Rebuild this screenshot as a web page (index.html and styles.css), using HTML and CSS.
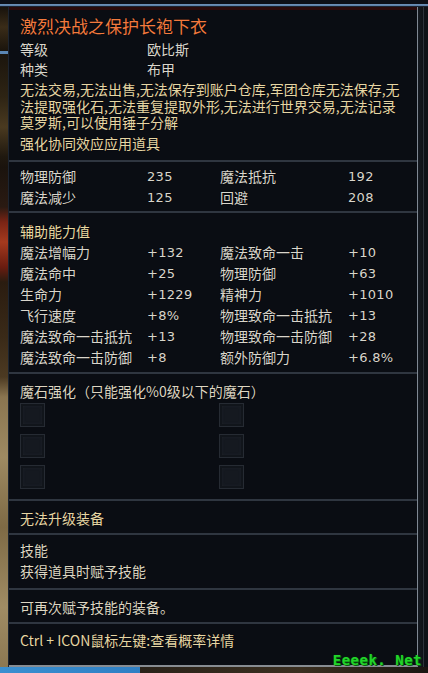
FILE: index.html
```html
<!DOCTYPE html>
<html lang="zh-CN">
<head>
<meta charset="utf-8">
<title>激烈决战之保护长袍下衣</title>
<link rel="stylesheet" href="styles.css">
</head>
<body>
<div class="screen">
  <div class="topline"></div>
  <div class="main">
    <div class="scene-left"></div>
    <div class="tooltip">
      <div class="redband"></div>
      <section class="sec sec-head">
        <div class="title">激烈决战之保护长袍下衣</div>
        <div class="kv"><span class="k">等级</span><span class="v">欧比斯</span></div>
        <div class="kv"><span class="k">种类</span><span class="v">布甲</span></div>
        <p class="desc">无法交易,无法出售,无法保存到账户仓库,军团仓库无法保存,无法提取强化石,无法重复提取外形,无法进行世界交易,无法记录莫罗斯,可以使用锤子分解</p>
        <div class="note">强化协同效应应用道具</div>
      </section>
      <section class="sec sec-base">
        <div class="stats">
          <span>物理防御</span><span class="num">235</span><span>魔法抵抗</span><span class="num">192</span>
          <span>魔法减少</span><span class="num">125</span><span>回避</span><span class="num">208</span>
        </div>
      </section>
      <section class="sec sec-bonus">
        <div class="heading">辅助能力值</div>
        <div class="stats">
          <span>魔法增幅力</span><span class="num">+132</span><span>魔法致命一击</span><span class="num">+10</span>
          <span>魔法命中</span><span class="num">+25</span><span>物理防御</span><span class="num">+63</span>
          <span>生命力</span><span class="num">+1229</span><span>精神力</span><span class="num">+1010</span>
          <span>飞行速度</span><span class="num">+8%</span><span>物理致命一击抵抗</span><span class="num">+13</span>
          <span>魔法致命一击抵抗</span><span class="num">+13</span><span>物理致命一击防御</span><span class="num">+28</span>
          <span>魔法致命一击防御</span><span class="num">+8</span><span>额外防御力</span><span class="num">+6.8%</span>
        </div>
      </section>
      <section class="sec sec-stones">
        <div class="line">魔石强化（只能强化%0级以下的魔石）</div>
        <div class="slots">
          <i class="slot"></i><i class="slot"></i>
          <i class="slot"></i><i class="slot"></i>
          <i class="slot"></i><i class="slot"></i>
        </div>
      </section>
      <section class="sec sec-one">
        <div class="line cream">无法升级装备</div>
      </section>
      <section class="sec sec-skill">
        <div class="line21">技能</div>
        <div class="line21">获得道具时赋予技能</div>
      </section>
      <section class="sec sec-one">
        <div class="line">可再次赋予技能的装备。</div>
      </section>
      <section class="sec sec-last">
        <div class="line cream">Ctrl + ICON鼠标左键:查看概率详情</div>
      </section>
    </div>
    <div class="scene-right"></div>
  </div>
  <div class="bottomstrip"></div>
  <div class="watermark">Eeeek. Net</div>
</div>
</body>
</html>
```

FILE: styles.css
```css
* { box-sizing: border-box; }
html, body { margin: 0; padding: 0; }
body {
  width: 428px;
  height: 673px;
  overflow: hidden;
  background: #0b0e13;
  font-family: "Noto Sans CJK SC", "Noto Sans", sans-serif;
  font-size: 14px;
  color: #d8d3c6;
}
.screen {
  position: relative;
  width: 428px;
  height: 673px;
  display: flex;
  flex-direction: column;
}
.topline {
  height: 7px;
  background: linear-gradient(to bottom, #0c1018 0, #0c1018 4px, #6d93bb 4px, #5a7ea5 6px, #1a2230 6px);
}
.main {
  display: flex;
  height: 660px;
}
.scene-left {
  width: 9px;
  background:
    linear-gradient(to bottom,
      #17120c 0, #3a2c18 20px, #1a140c 44px,
      #5b86b3 44px, #5b86b3 47px,
      #1b150d 47px, #2e2414 90px, #4a3a20 120px, #1f180f 150px,
      #1a130d 160px, #2a1a12 200px, #7a2415 215px, #a53a1e 235px, #6a1c10 260px,
      #2a1c10 275px, #3a2a18 330px, #4c3a22 370px,
      #8a7550 390px, #9e8a62 450px, #7e6a45 520px, #a08c64 600px, #8c7852 660px);
  border-right: 1px solid #1c2430;
}
.scene-right {
  width: 11px;
  border-left: 1px solid #7f8893;
  background: linear-gradient(to right, #151a21 0, #0e1217 5px, #2d333b 5px, #2d333b 6px, #0e1217 6px);
}
.tooltip {
  flex: 1;
  display: flex;
  flex-direction: column;
  background: #0a0d13;
  border-bottom: 2px solid #878c92;
}
.redband {
  height: 3px;
  background: #2a0b0c;
}
.sec {
  padding-left: 11px;
  border-bottom: 2px solid #2f3640;
  text-shadow: 0 0 1px rgba(0,0,0,0.9);
}
.sec-last { border-bottom: 0; padding-top: 6px; padding-bottom: 14px; }
.sec-head { padding-top: 4px; padding-bottom: 7px; }
.title {
  font-size: 17px;
  line-height: 24px;
  color: #f27a3e;
  margin-bottom: 1px;
}
.kv {
  display: grid;
  grid-template-columns: 127px auto;
  line-height: 20px;
  color: #d9d6cc;
}
.desc {
  margin: 2px 0 0;
  line-height: 16.5px;
  color: #e6d6a4;
  padding-right: 10px;
}
.note {
  margin-top: 2.5px;
  line-height: 20px;
  color: #e6d6a4;
}
.stats {
  display: grid;
  grid-template-columns: 127px 73px 128px auto;
  line-height: 21px;
  color: #d9d6cc;
}
.num {
  font-family: "DejaVu Sans", "Noto Sans", sans-serif;
  font-size: 13px;
  letter-spacing: 0.3px;
}
.sec-base { padding-top: 4px; padding-bottom: 3px; }
.sec-bonus { padding-top: 8px; padding-bottom: 4px; }
.heading { line-height: 21px; color: #e8d9a2; }
.sec-stones { padding-top: 7px; padding-bottom: 10px; }
.line { line-height: 20px; color: #ddd6c2; }
.cream { color: #e6d6a4; }
.slots {
  margin-top: 2px;
  display: grid;
  grid-template-columns: 199px 26px;
  row-gap: 7px;
}
.slot {
  display: block;
  width: 25px;
  height: 24px;
  background: #151920;
  border: 1px solid #262b33;
  box-shadow: inset 0 0 0 2px #11151b, inset 0 0 4px #2a3038;
}
.sec-one { padding-top: 7px; padding-bottom: 5px; }
.sec-one:first-of-type { padding-bottom: 6px; }
.sec-skill { padding-top: 5px; padding-bottom: 6px; }
.line21 { line-height: 21px; color: #ddd6c2; }
.bottomstrip {
  height: 6px;
  background: linear-gradient(to right, #3a8fd0 0, #2f7fc4 140px, #2a2219 140px, #3b2f20 300px, #1a1612 428px);
}
.watermark {
  position: absolute;
  right: 6px;
  bottom: 5px;
  font-family: "DejaVu Sans Mono", monospace;
  font-weight: bold;
  font-size: 14px;
  line-height: 16px;
  color: #22d42a;
  text-shadow: 0 0 1px #0a6a10, 1px 1px 0 #0c5a12;
  letter-spacing: 0.5px;
}
```
